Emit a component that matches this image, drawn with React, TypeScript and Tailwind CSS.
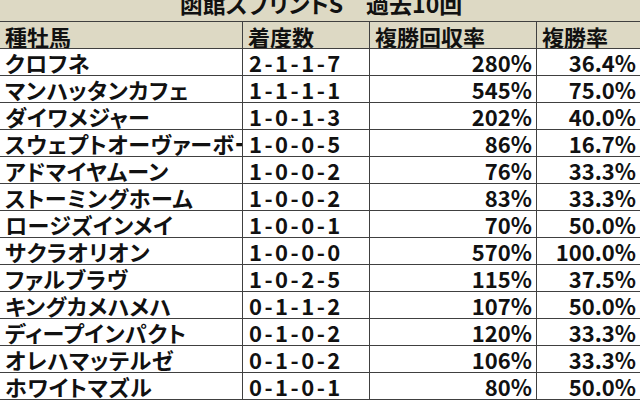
import React from "react";

const rows: [string, string, string, string][] = [
  ["クロフネ", "2-1-1-7", "280%", "36.4%"],
  ["マンハッタンカフェ", "1-1-1-1", "545%", "75.0%"],
  ["ダイワメジャー", "1-0-1-3", "202%", "40.0%"],
  ["スウェプトオーヴァーボード", "1-0-0-5", "86%", "16.7%"],
  ["アドマイヤムーン", "1-0-0-2", "76%", "33.3%"],
  ["ストーミングホーム", "1-0-0-2", "83%", "33.3%"],
  ["ロージズインメイ", "1-0-0-1", "70%", "50.0%"],
  ["サクラオリオン", "1-0-0-0", "570%", "100.0%"],
  ["ファルブラヴ", "1-0-2-5", "115%", "37.5%"],
  ["キングカメハメハ", "0-1-1-2", "107%", "50.0%"],
  ["ディープインパクト", "0-1-0-2", "120%", "33.3%"],
  ["オレハマッテルゼ", "0-1-0-2", "106%", "33.3%"],
  ["ホワイトマズル", "0-1-0-1", "80%", "50.0%"],
];

const font = "[font-family:'Noto_Sans_CJK_JP',sans-serif]";

export default function App() {
  return (
    <div
      className={`w-[640px] h-[400px] overflow-hidden bg-white text-[#111] text-[22px] font-bold ${font}`}
    >
      <div className="h-[22px] bg-[#ddd9c4] border-b border-[#404040] overflow-hidden flex justify-center items-start">
        <span className="leading-none mt-[-8px] whitespace-pre pl-[2px] text-[23px] font-bold [font-feature-settings:'palt']">函館スプリントS　過去10回</span>
      </div>
      <div className="grid grid-cols-[243px_127px_167px_1fr] h-[27px] bg-[#ddd9c4] border-b border-[#404040] leading-[28px]">
        <div className="border-r border-[#404040] pl-[5px] whitespace-nowrap overflow-hidden">種牡馬</div>
        <div className="border-r border-[#404040] pl-[5px] whitespace-nowrap overflow-hidden">着度数</div>
        <div className="border-r border-[#404040] pl-[5px] whitespace-nowrap overflow-hidden">複勝回収率</div>
        <div className="pl-[5px] whitespace-nowrap overflow-hidden">複勝率</div>
      </div>
      {rows.map((r, i) => (
        <div
          key={i}
          className="grid grid-cols-[243px_127px_167px_1fr] h-[27px] border-b border-[#404040] leading-[27px]"
        >
          <div className="border-r border-[#404040] pl-[5px] whitespace-nowrap overflow-hidden [font-feature-settings:'palt'] tracking-[0.5px]">{r[0]}</div>
          <div className="border-r border-[#404040] pl-[6px] whitespace-nowrap overflow-hidden tracking-[2.5px]">{r[1]}</div>
          <div className="border-r border-[#404040] pr-[4px] text-right whitespace-nowrap overflow-hidden">{r[2]}</div>
          <div className="pr-[4px] text-right whitespace-nowrap overflow-hidden">{r[3]}</div>
        </div>
      ))}
    </div>
  );
}
